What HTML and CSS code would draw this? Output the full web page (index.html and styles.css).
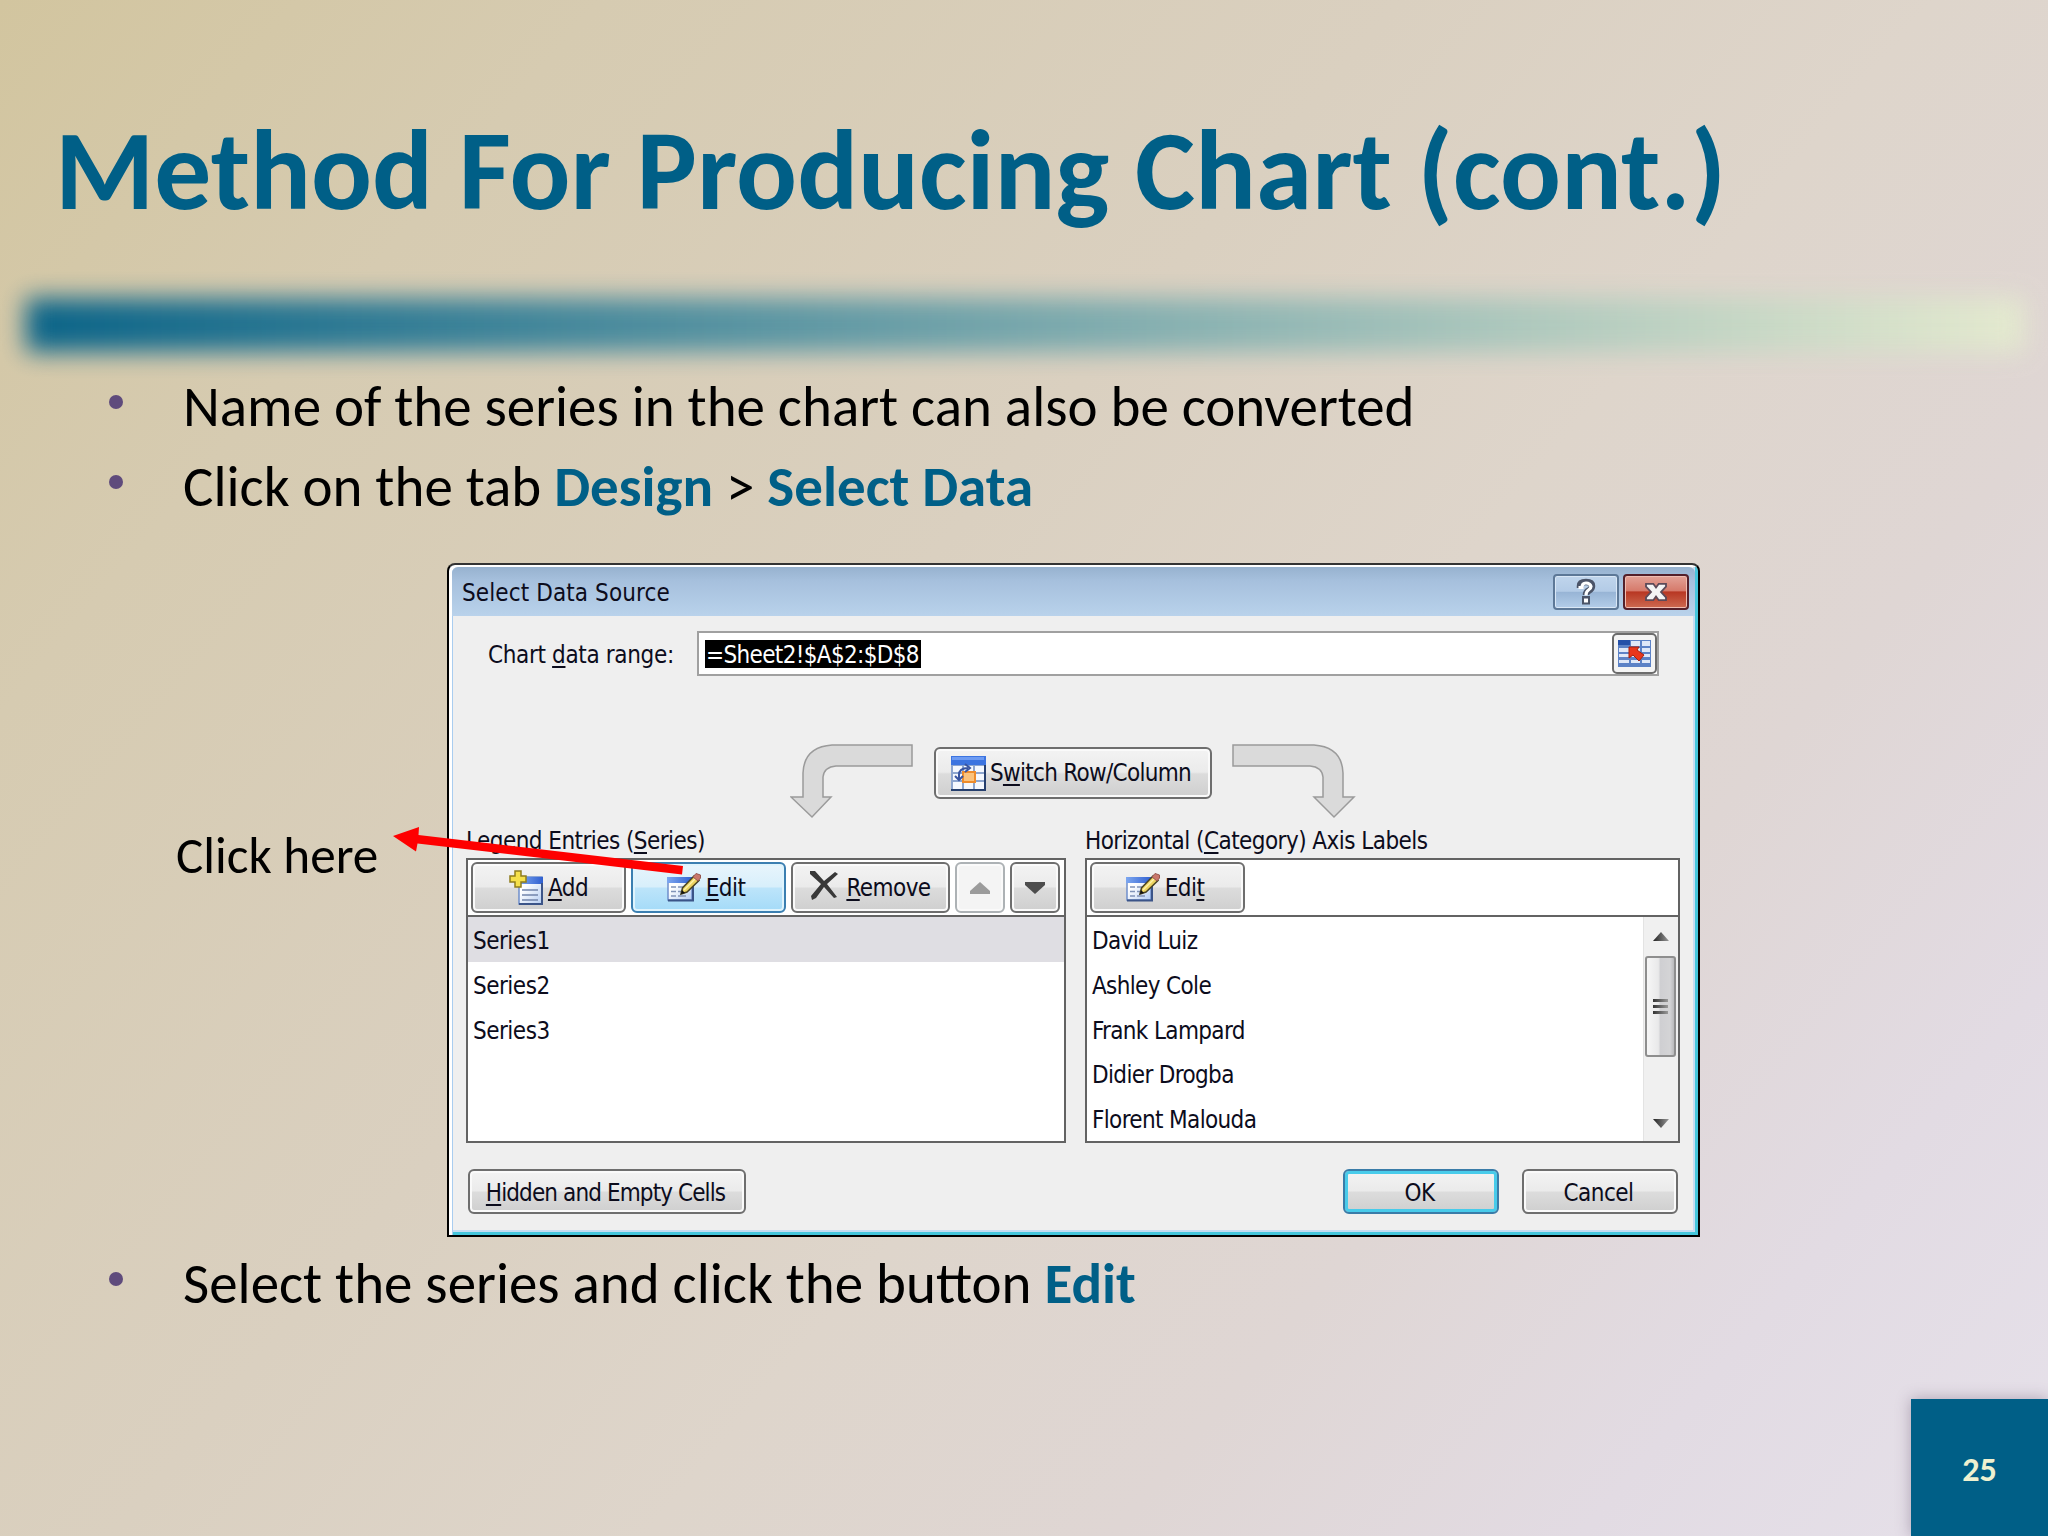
FILE: index.html
```html
<!DOCTYPE html>
<html lang="en">
<head>
    <meta charset="UTF-8">
    <title>Method For Producing Chart (cont.)</title>
    <link rel="stylesheet" href="styles.css">
</head>
<body>
    <!-- shared icons -->
    <svg width="0" height="0" class="defs">
        <defs>
            <linearGradient id="blueBar" x1="0" y1="0" x2="1" y2="0">
                <stop offset="0" stop-color="#7da7f0"/>
                <stop offset="1" stop-color="#2f5fd0"/>
            </linearGradient>
            <linearGradient id="sheet" x1="0" y1="0" x2="1" y2="1">
                <stop offset="0.3" stop-color="#ffffff"/>
                <stop offset="1" stop-color="#b5cdf2"/>
            </linearGradient>
            <linearGradient id="metal" x1="0" y1="0" x2="1" y2="0">
                <stop offset="0" stop-color="#222"/>
                <stop offset="1" stop-color="#999"/>
            </linearGradient>
            <symbol id="icon-edit" viewBox="0 0 34 30">
                <rect x="1" y="5" width="24" height="22" fill="url(#sheet)" stroke="#6f8fcb" stroke-width="1.5"/>
                <rect x="0" y="4" width="26" height="6" fill="url(#blueBar)"/>
                <path d="M1 27.500H26V9" fill="none" stroke="#3b5488" stroke-width="2"/>
                <path d="M4 14h5M4 18.500h5M4 23h5M11 14h6M11 18.500h4M11 23h8" stroke="#8093b8" stroke-width="1.500"/>
                <path d="M14 21l1.500-6L27 3l5 4.500L20 19z" fill="#ecd35f" stroke="#4a4424" stroke-width="1.500"/>
                <path d="M17 17L29 5" stroke="#fff3a8" stroke-width="1.500"/>
                <path d="M14 21l1-4 3 3z" fill="#111"/>
                <path d="M26 4l3-3.500 4.500 1.500v3L31 8z" fill="#c9776b" stroke="#96574f"/>
            </symbol>
        </defs>
    </svg>

    <div class="slide">
        <h1>Method For Producing Chart (cont.)</h1>
        <div class="rule"></div>

        <ul>
            <li>Name of the series in the chart can also be converted</li>
            <li>Click on the tab <b>Design</b> &gt; <b>Select Data</b></li>
        </ul>

        <div class="figure">
            <div class="callout">Click here</div>

            <div class="dialog">
                <div class="titlebar">
                    <span class="caption">Select Data Source</span>
                    <div class="winbtn help">
                        <svg width="24" height="28" viewBox="0 0 24 28">
                            <path d="M6 10V8q0-4 6-4t6 4q0 3-3 4.500-3 1.500-3 4.500" fill="none" stroke="#4b5468" stroke-width="6.500"/>
                            <path d="M8 18h8v8.500H8z" fill="#4b5468"/>
                            <path d="M4.500 9.500h3.500Q8 5 12 5t5 3.500q0 2-2.500 3.500T12 17.500" fill="none" stroke="#fff" stroke-width="3.200"/>
                            <path d="M10 20.500h4v4h-4z" fill="#fff"/>
                        </svg>
                    </div>
                    <div class="winbtn close">
                        <svg width="24" height="20" viewBox="0 0 26 22">
                            <path d="M2 2h8l3 4 3-4h8v3l-5.500 6 5.500 6v3h-8l-3-4-3 4H2v-3l5.500-6L2 5z" fill="#f4f4f4" stroke="#5c4a58" stroke-width="2"/>
                        </svg>
                    </div>
                </div>

                <div class="range">
                    <label>Chart <u>d</u>ata range:</label>
                    <div class="field">
                        <span class="selected">=Sheet2!$A$2:$D$8</span>
                        <div class="picker">
                            <svg width="33" height="29" viewBox="0 0 33 29">
                                <rect x="0" y="1" width="33" height="27" fill="#5c82c6"/>
                                <path d="M0 1h12v5H0z" fill="#2450a8"/>
                                <path d="M13 2h9v5h-9zM24 2h8v5h-8zM1 9h10v4H1zM24 9h8v4h-8zM1 15h10v3H1zM24 15h8v3h-8zM1 21h10v3H1zM13 21h9v3h-9zM24 21h8v3h-8zM13 9h9v9h-9z" fill="#dfe8f8"/>
                                <path d="M11 8h10l-2 3 7 5-5 6-6-6-4 3z" fill="#e8371c" stroke="#a3200f"/>
                            </svg>
                        </div>
                    </div>
                </div>

                <div class="switch">
                    <svg width="124" height="76" viewBox="0 0 124 76">
                        <path d="M122 2H42Q14 4 13 30V54H1L22 74L41 54H33V34Q34 24 46 23H122Z" fill="#dadada" stroke="#9b9b9b" stroke-width="1.500"/>
                    </svg>
                    <div class="btn">
                        <svg width="35" height="35" viewBox="0 0 35 35">
                            <rect x="0" y="0" width="35" height="35" fill="#8ea6cf"/>
                            <rect x="0" y="0" width="35" height="9" fill="#3c74e0"/>
                            <path d="M1 1h32v3H1z" fill="#6d9bf2"/>
                            <path d="M2 10h9v6H2zM13 10h9v6h-9zM24 10h9v6h-9zM2 18h9v6H2zM24 18h9v6h-9zM2 26h9v7H2zM13 26h9v7h-9zM24 26h9v7h-9z" fill="#f5f8fe"/>
                            <rect x="12" y="16" width="12" height="10" fill="#fbc27c" stroke="#ee8c2c" stroke-width="2"/>
                            <path d="M8 24v-5q0-7 9-7M14 8l5 4-5 4M4 20l4 4 4-4" fill="none" stroke="#3854a0" stroke-width="2"/>
                            <path d="M0 34h34V9" fill="none" stroke="#263f6d" stroke-width="2"/>
                        </svg>
                        <span>S<u>w</u>itch Row/Column</span>
                    </div>
                    <svg width="124" height="76" viewBox="0 0 124 76">
                        <path d="M1 2H82Q110 4 111 30V54H122L102 74L82 54H91V34Q90 24 78 23H1Z" fill="#dadada" stroke="#9b9b9b" stroke-width="1.500"/>
                    </svg>
                </div>

                <div class="panels">
                    <div class="group series">
                        <div class="group-label">Legend Entries (<u>S</u>eries)</div>
                        <div class="panel">
                            <div class="toolbar">
                                <div class="btn wide">
                                    <svg width="34" height="35" viewBox="0 0 34 35">
                                        <rect x="10" y="7" width="23" height="27" fill="url(#sheet)" stroke="#6f8fcb" stroke-width="1.500"/>
                                        <rect x="10" y="7" width="24" height="7" fill="url(#blueBar)"/>
                                        <path d="M10 34H33V13" fill="none" stroke="#3b5488" stroke-width="2"/>
                                        <path d="M13 20h16M13 25h16M13 30h16" stroke="#7184ab" stroke-width="1.500"/>
                                        <path d="M6 1h6v5h5v6h-5v5H6v-5H1V6h5z" fill="#f5e04a" stroke="#8e7c1c" stroke-width="1.500"/>
                                    </svg>
                                    <span><u>A</u>dd</span>
                                </div>
                                <div class="btn wide edit hot">
                                    <svg width="34" height="30"><use href="#icon-edit"/></svg>
                                    <span><u>E</u>dit</span>
                                </div>
                                <div class="btn remove">
                                    <svg width="28" height="30" viewBox="0 0 28 30">
                                        <path d="M0 1h5l9 10L25 2l3 2-11 10 10 13-3 1-10-11L6 28l-4 2-1-4L11 14 0 4z" fill="#383838"/>
                                    </svg>
                                    <span><u>R</u>emove</span>
                                </div>
                                <div class="btn square disabled">
                                    <svg width="20" height="12"><path d="M10 0L20 9v3H0V9z" fill="#9b9b9b"/></svg>
                                </div>
                                <div class="btn square">
                                    <svg width="20" height="12"><path d="M10 12L20 3V0H0v3z" fill="#4d4d4d"/></svg>
                                </div>
                            </div>
                            <div class="rows">
                                <div class="row active">Series1</div>
                                <div class="row">Series2</div>
                                <div class="row">Series3</div>
                            </div>
                        </div>
                    </div>

                    <div class="group axis">
                        <div class="group-label">Horizontal (<u>C</u>ategory) Axis Labels</div>
                        <div class="panel">
                            <div class="toolbar">
                                <div class="btn wide edit">
                                    <svg width="34" height="30"><use href="#icon-edit"/></svg>
                                    <span>Edi<u>t</u></span>
                                </div>
                            </div>
                            <div class="list">
                                <div class="rows">
                                    <div class="row">David Luiz</div>
                                    <div class="row">Ashley Cole</div>
                                    <div class="row">Frank Lampard</div>
                                    <div class="row">Didier Drogba</div>
                                    <div class="row">Florent Malouda</div>
                                </div>
                                <div class="scrollbar">
                                    <svg width="16" height="9"><path d="M8 0L16 9H0z" fill="url(#metal)"/></svg>
                                    <div class="thumb"><i></i><i></i><i></i></div>
                                    <svg width="16" height="9"><path d="M8 9L16 0H0z" fill="url(#metal)"/></svg>
                                </div>
                            </div>
                        </div>
                    </div>
                </div>

                <div class="footer">
                    <div class="btn hidden-cells"><span><u>H</u>idden and Empty Cells</span></div>
                    <div class="btn ok"><span>OK</span></div>
                    <div class="btn cancel"><span>Cancel</span></div>
                </div>
            </div>

            <svg class="arrow" width="300" height="60" viewBox="0 0 300 60">
                <path d="M3 16L29 7L28.500 15L293 46L292 54.500L27.500 23.500L26 31.500Z" fill="#fe0000"/>
            </svg>
        </div>

        <ul class="last">
            <li>Select the series and click the button <b>Edit</b></li>
        </ul>

        <div class="page-number">25</div>
    </div>
</body>
</html>
```

FILE: styles.css
```css
* {
    box-sizing: border-box;
}

body {
    margin: 0;
    font-family: Carlito, Lato, sans-serif;
    color: #000;
}

.defs {
    position: absolute;
}

.slide {
    position: relative;
    width: 2048px;
    height: 1536px;
    overflow: hidden;
    display: flex;
    flex-direction: column;
    background: linear-gradient(130deg, #d2c59f 0%, #d6cbb1 18%, #dad0c0 42%, #ded5cb 58%, #dfd6d4 72%, #e2dbe3 86%, #e6e1ea 100%);
}

h1 {
    margin: 109px 0 0 55px;
    font-size: 113.6px;
    line-height: 123px;
    font-weight: 700;
    color: #005f87;
}

.rule {
    height: 54px;
    margin: 66px 24px 1px 26px;
    background: linear-gradient(90deg, #005f87, #e5ebcf);
    filter: blur(12px);
    opacity: 0.95;
}

ul {
    list-style: none;
    margin: 13px 0 0;
    padding: 0 0 0 109px;
}

ul.last {
    margin-top: 6px;
}

li {
    display: flex;
    white-space: pre;
    font-size: 57px;
    line-height: 82px;
    height: 80px;
}

li::before {
    content: "";
    width: 14px;
    height: 14px;
    margin: 29px 60px 0 0;
    border-radius: 50%;
    background: #5f4b7c;
}

li b {
    color: #005f87;
}

.figure {
    position: relative;
    display: flex;
    margin-top: 37px;
}

.callout {
    width: 447px;
    padding: 263px 0 0 176px;
    font-size: 51.2px;
    line-height: 60px;
}

.arrow {
    position: absolute;
    left: 390px;
    top: 257px;
}

/* dialog window */
.dialog {
    width: 1253px;
    height: 674px;
    display: flex;
    flex-direction: column;
    border: 2px solid #000;
    border-top-color: #333;
    border-radius: 8px 8px 0 0;
    background: #efefef;
    box-shadow: inset 3px 2px #fff, inset 4px 0 #a9cdf0, inset -3px -3px #45c6dc, inset -5px -5px #c5dcf2;
    font-family: "DejaVu Sans Condensed", "DejaVu Sans", sans-serif;
    font-size: 24px;
    letter-spacing: -0.55px;
    color: #0c0c1c;
}

.dialog u {
    text-decoration-thickness: 2px;
    text-underline-offset: 3px;
    text-decoration-skip-ink: none;
}

.titlebar {
    display: flex;
    align-items: center;
    height: 49px;
    margin: 2px 3px 0;
    padding: 0 6px 0 10px;
    border-radius: 6px 6px 0 0;
    background: linear-gradient(#97b2cf 0%, #a6c0dd 28%, #b9d2eb 100%);
}

.caption {
    flex: 1;
    padding-top: 2px;
    letter-spacing: 0.1px;
}

.winbtn {
    display: flex;
    align-items: center;
    justify-content: center;
    width: 66px;
    height: 36px;
    border: 2px solid #5d7897;
    border-radius: 4px;
    box-shadow: inset 0 0 0 1px #d9e7f6;
}

.help {
    margin-right: 4px;
    background: linear-gradient(#c0d5ec 0%, #b3cbe6 48%, #97b4d5 50%, #b3cde9 100%);
}

.close {
    border-color: #54202a;
    background: linear-gradient(#e3a297 0%, #d67a6b 46%, #b83723 50%, #cd6a51 100%);
    box-shadow: inset 0 0 0 1px #f0bdb2;
}

.range {
    display: flex;
    align-items: center;
    height: 45px;
    margin-top: 15px;
    padding-left: 39px;
}

.range label {
    width: 209px;
    padding-top: 3px;
    letter-spacing: -0.35px;
}

.field {
    display: flex;
    align-items: center;
    justify-content: space-between;
    width: 962px;
    height: 45px;
    padding-left: 6px;
    border: 2px solid #a0a0a0;
    background: #fff;
}

.selected {
    height: 28px;
    line-height: 30px;
    padding: 0 2px 0 1px;
    background: #000;
    color: #fff;
    letter-spacing: -0.65px;
}

.picker {
    display: flex;
    align-items: center;
    justify-content: center;
    width: 45px;
    height: 41px;
    border: 2px solid #6c6c6c;
    border-radius: 5px;
    background: #f4f4f4;
}

.switch {
    display: flex;
    margin: 67px 0 0 341px;
}

.switch .btn {
    width: 278px;
    height: 52px;
    margin: 4px 20px 0;
    padding-right: 4px;
    letter-spacing: -0.7px;
}

.switch .btn svg {
    margin-right: 4px;
}

.btn {
    display: flex;
    align-items: center;
    justify-content: center;
    height: 51px;
    border: 2px solid #6e6e6e;
    border-radius: 6px;
    background: linear-gradient(#f3f3f3 0%, #ebebeb 48%, #dcdcdc 52%, #cfcfcf 100%);
    box-shadow: inset 0 0 0 2px #fafafa;
}

.btn span {
    white-space: pre;
}

.panels {
    display: flex;
    justify-content: space-between;
    margin-top: 3px;
    padding: 0 18px 0 17px;
}

.series {
    width: 600px;
}

.axis {
    width: 595px;
}

.group-label {
    height: 36px;
    line-height: 38px;
}

.panel {
    height: 285px;
    border: 2px solid #636363;
    background: #fff;
}

.toolbar {
    display: flex;
    gap: 5px;
    height: 57px;
    padding: 2px 2px 0 3px;
    border-bottom: 2px solid #636363;
}

.wide {
    width: 155px;
}

.wide svg {
    margin-right: 5px;
}

.edit {
    padding-right: 5px;
}

.hot {
    border-color: #3b7fb1;
    background: linear-gradient(#e8f5fc 0%, #d8effb 48%, #bce4fa 52%, #a4dbf8 100%);
    box-shadow: inset 0 0 0 2px #dff4fd;
}

.remove {
    width: 159px;
}

.remove svg {
    margin: -5px 8px 0 0;
}

.square {
    width: 50px;
}

.disabled {
    border-color: #adb2b5;
    background: #f4f4f4;
}

.list {
    display: flex;
}

.rows {
    flex: 1;
}

.row {
    height: 44.8px;
    padding: 2px 0 0 5px;
    line-height: 44.8px;
    letter-spacing: -0.5px;
}

.list .row {
    letter-spacing: -0.65px;
}

.active {
    background: #dfdee3;
}

.scrollbar {
    display: flex;
    flex-direction: column;
    align-items: center;
    width: 35px;
    height: 224px;
    padding: 15px 1px 13px 0;
    border-left: 1px solid #e3e3e3;
    background: #f0f0f0;
}

.thumb {
    display: flex;
    flex-direction: column;
    align-items: center;
    justify-content: center;
    gap: 3px;
    width: 31px;
    height: 101px;
    margin: 15px 0 auto;
    border: 2px solid #8e8e8e;
    border-radius: 3px;
    background: linear-gradient(90deg, #f6f6f6 0%, #e9e9ea 42%, #cfcfd2 50%, #d4d4d6 85%, #b9b9bb 100%);
}

.thumb i {
    width: 15px;
    height: 3px;
    background: linear-gradient(90deg, #333, #999);
}

.footer {
    display: flex;
    margin-top: 26px;
    padding: 0 20px 0 19px;
}

.footer .btn {
    width: 156px;
    height: 45px;
    padding: 2px 3px 0 0;
}

.footer .hidden-cells {
    width: 278px;
    margin-right: auto;
    letter-spacing: -0.9px;
}

.footer .ok {
    margin-right: 23px;
    border-color: #3a7ca8;
    box-shadow: inset 0 0 0 3px #48cbea;
}

.page-number {
    position: absolute;
    right: 0;
    bottom: 0;
    width: 137px;
    height: 137px;
    background: #005f87;
    box-shadow: 0 0 14px rgba(90, 70, 100, 0.4);
    color: #eff1d0;
    font-size: 34.1px;
    font-weight: 700;
    line-height: 142px;
    text-align: center;
}
```
